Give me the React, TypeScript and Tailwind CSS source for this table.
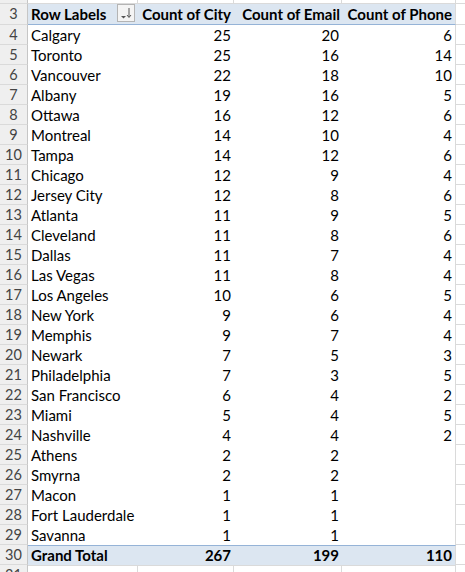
const rows: [string, number, number, number | null][] = [
  ["Calgary", 25, 20, 6],
  ["Toronto", 25, 16, 14],
  ["Vancouver", 22, 18, 10],
  ["Albany", 19, 16, 5],
  ["Ottawa", 16, 12, 6],
  ["Montreal", 14, 10, 4],
  ["Tampa", 14, 12, 6],
  ["Chicago", 12, 9, 4],
  ["Jersey City", 12, 8, 6],
  ["Atlanta", 11, 9, 5],
  ["Cleveland", 11, 8, 6],
  ["Dallas", 11, 7, 4],
  ["Las Vegas", 11, 8, 4],
  ["Los Angeles", 10, 6, 5],
  ["New York", 9, 6, 4],
  ["Memphis", 9, 7, 4],
  ["Newark", 7, 5, 3],
  ["Philadelphia", 7, 3, 5],
  ["San Francisco", 6, 4, 2],
  ["Miami", 5, 4, 5],
  ["Nashville", 4, 4, 2],
  ["Athens", 2, 2, null],
  ["Smyrna", 2, 2, null],
  ["Macon", 1, 1, null],
  ["Fort Lauderdale", 1, 1, null],
  ["Savanna", 1, 1, null],
];

const grid = "grid grid-cols-[28px_110px_96px_108px_114px_9px]";

const RowNum = ({ n }: { n?: number }) => (
  <div className="flex items-center justify-center bg-[#efefef] border-r border-r-[#c6c6c6] border-b border-b-[#dadada] text-[#444] text-[14.5px] pt-[1px]">
    {n}
  </div>
);

const SortButton = () => (
  <div className="absolute right-[3px] top-[0px] w-[18px] h-[18px] border border-[#b4b4b4] bg-[#f4f4f4] flex items-center justify-center">
    <svg width="16" height="16" viewBox="0 0 16 16">
      <path d="M3 11h5l-2.5 2.5z" fill="#555" />
      <path d="M11 3v9" stroke="#555" strokeWidth="1" />
      <path d="M9 10l2 2.5 2-2.5" stroke="#555" strokeWidth="1" fill="none" />
    </svg>
  </div>
);

export default function App() {
  return (
    <div
      className="w-[465px] h-[572px] overflow-hidden bg-white text-[15px] leading-none text-black"
      style={{ fontFamily: "Lato, 'Open Sans', sans-serif" }}
    >
      {/* tail of row 2 */}
      <div className={`${grid} h-[4px]`}>
        <div className="bg-[#efefef] border-r border-r-[#c6c6c6] border-b border-b-[#dadada]" />
        <div className="border-r border-[#dadada] border-b" />
        <div className="border-r border-[#dadada] border-b" />
        <div className="border-r border-[#dadada] border-b" />
        <div className="border-r border-[#dadada] border-b" />
        <div className="border-b border-[#dadada]" />
      </div>

      {/* header row */}
      <div className={`${grid} h-[21px]`}>
        <RowNum n={3} />
        <div className="relative flex items-center pl-[3px] font-bold bg-[#dce6f1] border-b border-[#95b3d7]">
          Row Labels
          <SortButton />
        </div>
        <div className="flex items-center justify-end pr-[3px] font-bold bg-[#dce6f1] border-b border-[#95b3d7]">
          Count of City
        </div>
        <div className="flex items-center justify-end pr-[2px] font-bold bg-[#dce6f1] border-b border-[#95b3d7]">
          Count of Email
        </div>
        <div className="flex items-center justify-end pr-[3px] font-bold bg-[#dce6f1] border-b border-[#95b3d7] border-r border-r-[#dadada]">
          Count of Phone
        </div>
        <div className="border-b border-[#dadada]" />
      </div>

      {rows.map(([city, c, e, p], i) => (
        <div key={city} className={`${grid} h-[20px]`}>
          <RowNum n={i + 4} />
          <div className="flex items-center pl-[3px]">{city}</div>
          <div className="flex items-center justify-end pr-[3px]">{c}</div>
          <div className="flex items-center justify-end pr-[3px]">{e}</div>
          <div className="flex items-center justify-end pr-[3px] border-r border-[#dadada]">{p}</div>
          <div className="border-b border-[#dadada]" />
        </div>
      ))}

      {/* grand total */}
      <div className={`${grid} h-[20px]`}>
        <RowNum n={30} />
        <div className="flex items-center pl-[3px] font-bold bg-[#dce6f1] border-t border-[#95b3d7]">Grand Total</div>
        <div className="flex items-center justify-end pr-[3px] font-bold bg-[#dce6f1] border-t border-[#95b3d7]">267</div>
        <div className="flex items-center justify-end pr-[3px] font-bold bg-[#dce6f1] border-t border-[#95b3d7]">199</div>
        <div className="flex items-center justify-end pr-[3px] font-bold bg-[#dce6f1] border-t border-[#95b3d7] border-r border-r-[#dadada]">110</div>
        <div className="border-b border-[#dadada]" />
      </div>

      {/* row 31 */}
      <div className={`${grid} h-[20px]`}>
        <RowNum n={31} />
        <div className="border-r border-[#dadada] border-t" />
        <div className="border-r border-[#dadada] border-t" />
        <div className="border-r border-[#dadada] border-t" />
        <div className="border-r border-[#dadada] border-t" />
        <div />
      </div>
    </div>
  );
}
